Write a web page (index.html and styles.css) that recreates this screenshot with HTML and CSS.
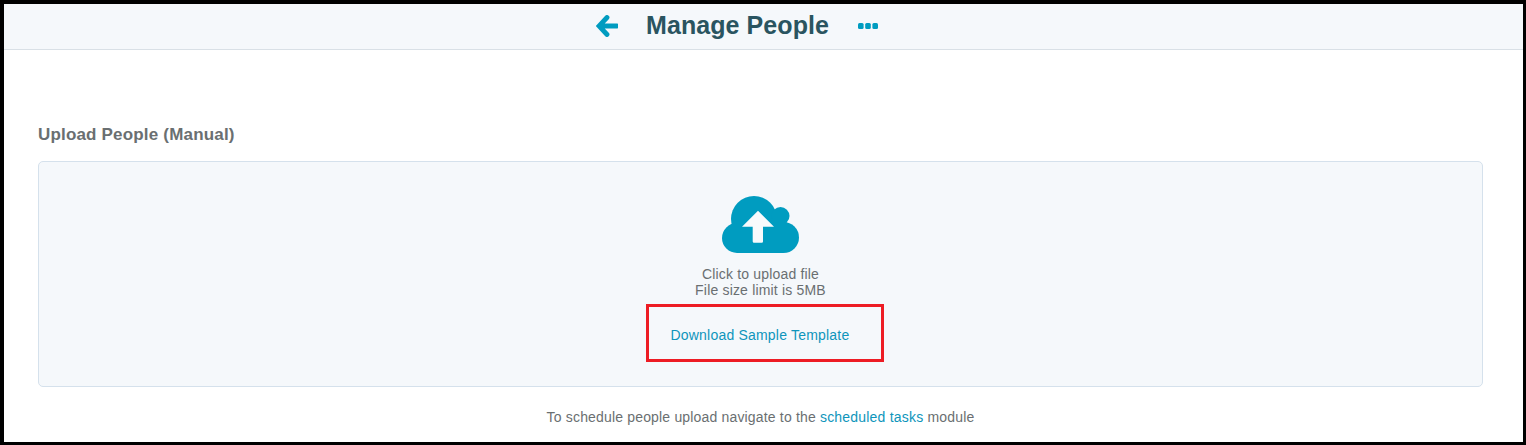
FILE: index.html
```html
<!DOCTYPE html>
<html lang="en">

<head>
    <meta charset="UTF-8">
    <meta name="viewport" content="width=device-width, initial-scale=1.0">
    <title>Manage People</title>
    <link rel="stylesheet" href="styles.css">
</head>

<body>
    <div class="frame">
        <header class="topbar">
            <svg class="back-icon" viewBox="0 0 22 22" width="22" height="22">
                <path d="M11 2.500 L3 11 L11 19.500 M4 11 H21" fill="none" stroke="#009cc0" stroke-width="4.800" stroke-linecap="round"/>
            </svg>
            <h1 class="title">Manage People</h1>
            <svg class="more-icon" viewBox="0 0 20 6" width="20" height="6">
                <rect x="0" y="0" width="5.600" height="6" rx="1.500" fill="#009cc0"/>
                <rect x="7.200" y="0" width="5.600" height="6" rx="1.500" fill="#009cc0"/>
                <rect x="14.400" y="0" width="5.600" height="6" rx="1.500" fill="#009cc0"/>
            </svg>
        </header>

        <main class="content">
            <h2 class="section-title">Upload People (Manual)</h2>
            <section class="dropzone">
                <svg class="cloud-icon" viewBox="0 0 78 58" width="78" height="58">
                    <g fill="#009cc0">
                        <circle cx="32" cy="23" r="23"/>
                        <circle cx="58.500" cy="20" r="9"/>
                        <circle cx="15" cy="42" r="15"/>
                        <circle cx="61.500" cy="41.500" r="15.500"/>
                        <rect x="15" y="26" width="46" height="31"/>
                    </g>
                    <path d="M32 46.700 Q30.700 46.700 30.700 45.400 V30.700 H20 L36 14.700 L52 30.700 H41 V45.400 Q41 46.700 39.700 46.700 Z" fill="#f8fafc"/>
                </svg>
                <p class="hint">Click to upload file<br>File size limit is 5MB</p>
                <div class="template-box">
                    <a class="link" href="#">Download Sample Template</a>
                </div>
            </section>
            <p class="note">To schedule people upload navigate to the <a class="link" href="#">scheduled tasks</a> module</p>
        </main>
    </div>
</body>

</html>
```

FILE: styles.css
```css
html,
body {
    margin: 0;
    padding: 0;
    height: 100%;
}

body {
    font-family: "Liberation Sans", Arial, sans-serif;
    background: #fff;
    color: #6a6f71;
}

.frame {
    box-sizing: border-box;
    height: 445px;
    overflow: hidden;
    border-style: solid;
    border-color: #000;
    border-width: 4px 3px 3px 4px;
}

.topbar {
    box-sizing: border-box;
    height: 46px;
    display: flex;
    align-items: center;
    background: #f5f8fb;
    border-bottom: 1px solid #d9e0e6;
    padding: 0 0 2px 592px;
}

.title {
    margin: 0 0 0 28px;
    font-size: 25px;
    letter-spacing: 0.08px;
    font-weight: bold;
    color: #2a5460;
}

.more-icon {
    margin: 0 0 0 29px;
}

.content {
    padding: 76px 40px 0 34px;
}

.section-title {
    margin: 0 0 17px;
    font-size: 17px;
    letter-spacing: 0.18px;
    line-height: 18px;
    font-weight: bold;
    color: #6a6f71;
}

.dropzone {
    box-sizing: border-box;
    height: 226px;
    display: flex;
    flex-direction: column;
    align-items: center;
    background: #f5f8fb;
    border: 1px solid #d5e1ec;
    border-radius: 5px;
    padding-top: 34px;
}

.cloud-icon {
    display: block;
}

.hint {
    margin: 12px 0 0;
    font-size: 14px;
    letter-spacing: 0.18px;
    line-height: 16px;
    text-align: center;
}

.template-box {
    box-sizing: border-box;
    width: 238px;
    height: 58px;
    margin: 6px 0 0 8px;
    padding: 4px 0 0 22px;
    display: flex;
    align-items: center;
    border: 3px solid #ed1c24;
}

.link {
    color: #0e95bb;
    font-size: 14px;
    letter-spacing: 0.2px;
    text-decoration: none;
}

.note {
    margin: 22px 0 0;
    font-size: 14px;
    letter-spacing: 0.17px;
    line-height: 16px;
    text-align: center;
}
```
